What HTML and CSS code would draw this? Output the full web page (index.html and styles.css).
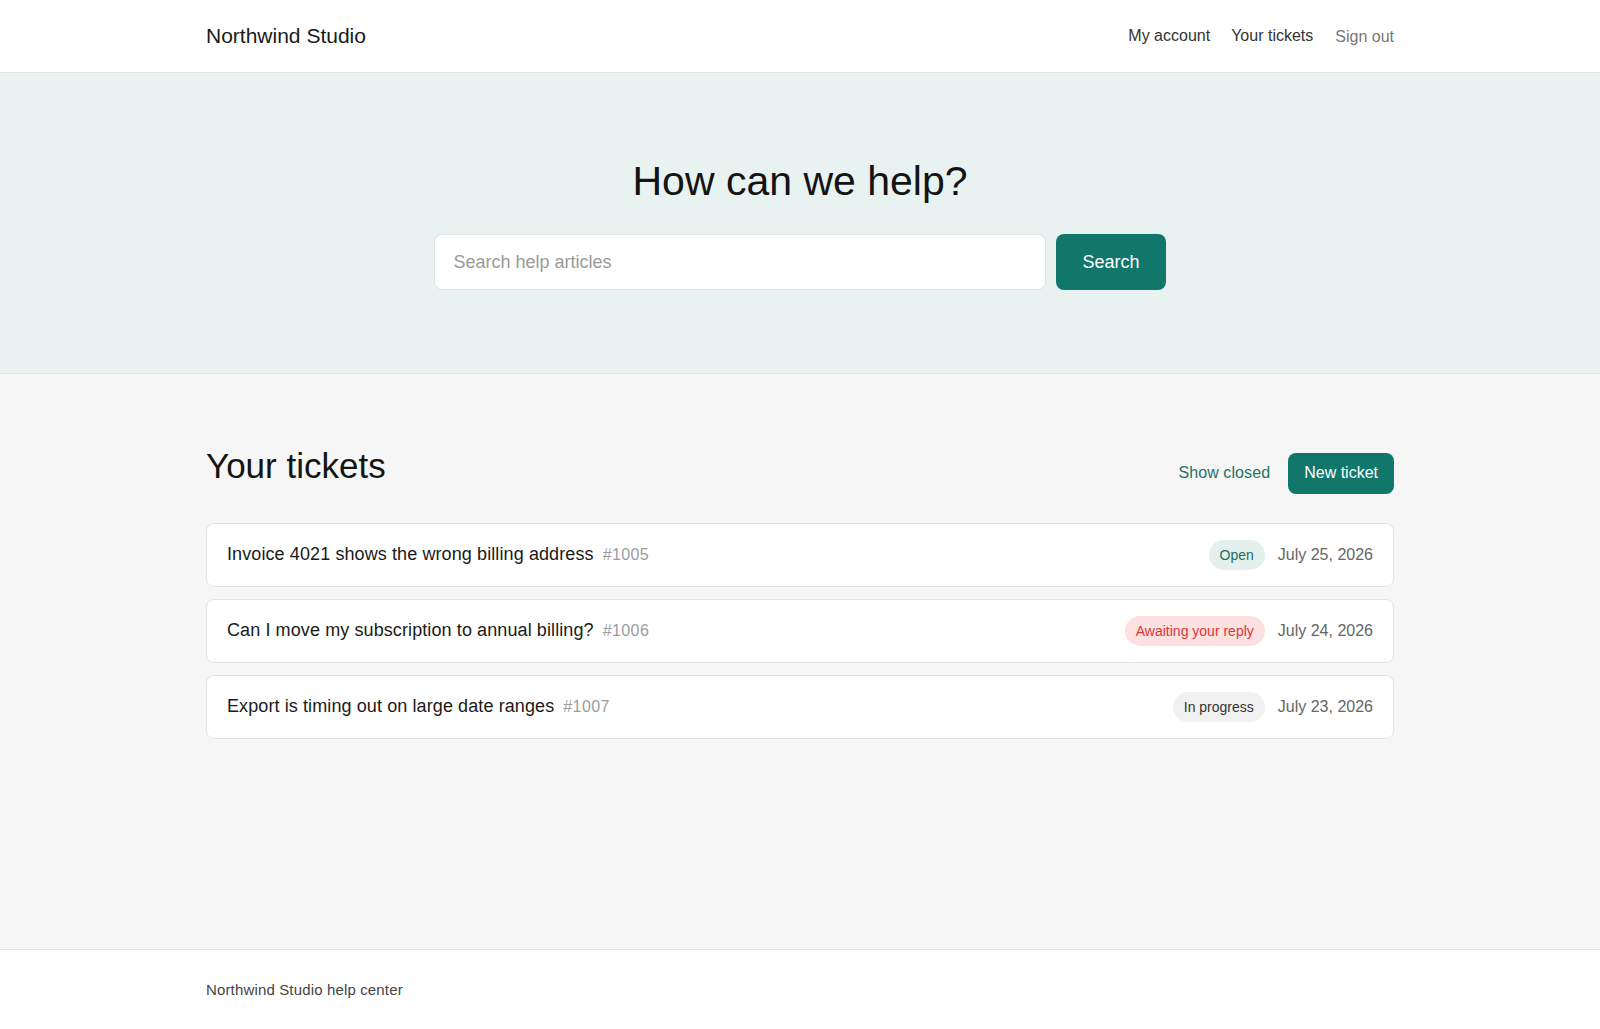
FILE: index.html
```html
<!DOCTYPE html>
<html lang="en">
<head>
<meta charset="utf-8">
<title>Northwind Studio help center</title>
<link rel="stylesheet" href="styles.css">
</head>
<body>
<header class="site-header">
  <div class="container header-inner">
    <a class="brand" href="#">Northwind Studio</a>
    <nav class="nav">
      <a class="nav-link" href="#">My account</a>
      <a class="nav-link" href="#">Your tickets</a>
      <button class="nav-signout" type="button">Sign out</button>
    </nav>
  </div>
</header>

<section class="hero">
  <h1 class="hero-title">How can we help?</h1>
  <form class="search" onsubmit="return false">
    <input class="search-input" type="text" placeholder="Search help articles">
    <button class="btn btn-search" type="submit">Search</button>
  </form>
</section>

<main class="main">
  <div class="container">
    <div class="tickets-head">
      <h2 class="tickets-title">Your tickets</h2>
      <div class="tickets-actions">
        <a class="link-closed" href="#">Show closed</a>
        <a class="btn btn-new" href="#">New ticket</a>
      </div>
    </div>
    <ul class="ticket-list">
      <li class="ticket">
        <div class="ticket-main">
          <span class="ticket-subject">Invoice 4021 shows the wrong billing address</span>
          <span class="ticket-id">#1005</span>
        </div>
        <div class="ticket-meta">
          <span class="badge badge-open">Open</span>
          <span class="ticket-date">July 25, 2026</span>
        </div>
      </li>
      <li class="ticket">
        <div class="ticket-main">
          <span class="ticket-subject">Can I move my subscription to annual billing?</span>
          <span class="ticket-id">#1006</span>
        </div>
        <div class="ticket-meta">
          <span class="badge badge-awaiting">Awaiting your reply</span>
          <span class="ticket-date">July 24, 2026</span>
        </div>
      </li>
      <li class="ticket">
        <div class="ticket-main">
          <span class="ticket-subject">Export is timing out on large date ranges</span>
          <span class="ticket-id">#1007</span>
        </div>
        <div class="ticket-meta">
          <span class="badge badge-progress">In progress</span>
          <span class="ticket-date">July 23, 2026</span>
        </div>
      </li>
    </ul>
  </div>
</main>

<footer class="site-footer">
  <div class="container">Northwind Studio help center</div>
</footer>
</body>
</html>
```

FILE: styles.css
```css
* { box-sizing: border-box; }

html, body { margin: 0; padding: 0; }

body {
  font-family: "Liberation Sans", Arial, sans-serif;
  color: #1a1a1a;
  background: #f6f6f6;
  min-height: 100vh;
  display: flex;
  flex-direction: column;
}

a { text-decoration: none; color: inherit; }

.container {
  width: 1188px;
  margin: 0 auto;
}

/* Header */
.site-header {
  background: #ffffff;
  border-bottom: 1px solid #e4e4e4;
}

.header-inner {
  height: 72px;
  display: flex;
  align-items: center;
  justify-content: space-between;
}

.brand {
  font-size: 21px;
  color: #1a1a1a;
  margin-top: -1px;
}

.nav {
  display: flex;
  align-items: center;
  gap: 21px;
}

.nav-link {
  font-size: 16px;
  color: #333333;
}

.nav-signout {
  font-family: inherit;
  font-size: 16px;
  color: #777777;
  background: none;
  border: 0;
  padding: 0;
  margin: 2px 0 0 1px;
  cursor: pointer;
}

/* Hero */
.hero {
  background: #e8f2f0;
  border-bottom: 1px solid #dfe6e4;
  padding: 84px 0 83px;
  text-align: center;
}

.hero-title {
  margin: 0 0 29px;
  font-size: 41px;
  line-height: 48px;
  font-weight: 400;
  color: #141414;
}

.search {
  display: flex;
  justify-content: center;
  gap: 10px;
}

.search-input {
  width: 612px;
  height: 56px;
  border: 1px solid #e1e4e3;
  border-radius: 8px;
  background: #ffffff;
  padding: 0 18px;
  font-family: inherit;
  font-size: 18px;
  color: #1a1a1a;
  outline: none;
}

.search-input::placeholder { color: #9a9a9a; }

.btn {
  font-family: inherit;
  background: #10776a;
  color: #ffffff;
  border: 0;
  border-radius: 8px;
  cursor: pointer;
  display: inline-flex;
  align-items: center;
  justify-content: center;
}

.btn-search {
  height: 56px;
  padding: 0 26px;
  font-size: 18px;
}

/* Main */
.main {
  flex: 1;
  padding: 71px 0 40px;
}

.tickets-head {
  display: flex;
  align-items: baseline;
  justify-content: space-between;
  margin-bottom: 29px;
}

.tickets-title {
  margin: 0;
  font-size: 35px;
  line-height: 41px;
  font-weight: 400;
  color: #141414;
}

.tickets-actions {
  display: flex;
  align-items: baseline;
  gap: 18px;
}

.link-closed {
  font-size: 16px;
  color: #1d7464;
  letter-spacing: 0.1px;
}

.btn-new {
  height: 41px;
  padding: 0 16px;
  font-size: 16px;
}

.ticket-list {
  list-style: none;
  margin: 0;
  padding: 0;
  display: flex;
  flex-direction: column;
  gap: 12px;
}

.ticket {
  background: #ffffff;
  border: 1px solid #e2e2e2;
  border-radius: 8px;
  height: 64px;
  padding: 0 20px;
  display: flex;
  align-items: center;
  justify-content: space-between;
}

.ticket-main {
  display: flex;
  align-items: baseline;
  gap: 9px;
}

.ticket-subject {
  font-size: 18px;
  letter-spacing: 0.1px;
  color: #1a1a1a;
}

.ticket-id {
  font-size: 16px;
  letter-spacing: 0.4px;
  color: #9c9c9c;
}

.ticket-meta {
  display: flex;
  align-items: center;
  gap: 13px;
}

.badge {
  font-size: 14px;
  height: 30px;
  line-height: 30px;
  padding: 0 11px;
  border-radius: 15px;
}

.badge-open { background: #e3f0ed; color: #1f6b5c; }
.badge-awaiting { background: #fde1e1; color: #d93636; }
.badge-progress { background: #f1f1f1; color: #333333; }

.ticket-date {
  font-size: 16px;
  color: #666666;
}

/* Footer */
.site-footer {
  background: #ffffff;
  border-top: 1px solid #e4e4e4;
  padding: 29px 0;
  font-size: 15px;
  letter-spacing: 0.15px;
  line-height: 21px;
  color: #444444;
}
```
